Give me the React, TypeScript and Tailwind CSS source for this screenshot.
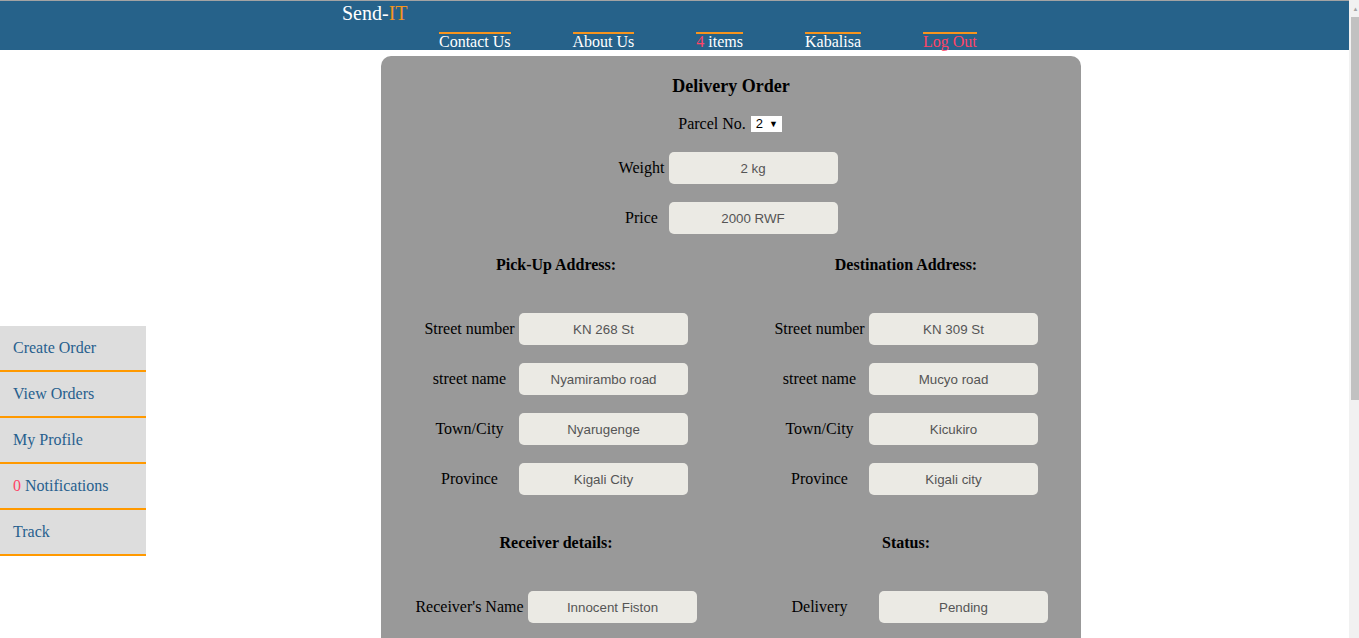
import type { ReactNode } from "react";

const serif = "font-['Liberation_Serif','Times_New_Roman',serif]";

const navLinks = [
  { label: "Contact Us" },
  { label: "About Us" },
  { label: "items", count: "4" },
  { label: "Kabalisa" },
  { label: "Log Out", danger: true },
];

const sideLinks = [
  { label: "Create Order" },
  { label: "View Orders" },
  { label: "My Profile" },
  { label: "Notifications", count: "0" },
  { label: "Track" },
];

function Field({ value }: { value: string }) {
  return (
    <input
      readOnly
      value={value}
      className="h-[32px] w-[169px] rounded-[5px] bg-[#ebeae4] text-center font-['Liberation_Sans',Arial,sans-serif] text-[13.33px] text-[#555] outline-none"
    />
  );
}

function Row({ label, value, labelW }: { label: string; value: string; labelW: string }) {
  return (
    <div className="flex items-center gap-[4px]">
      <span className={`${labelW} whitespace-nowrap text-center text-[16px] leading-[18px] text-black`}>
        {label}
      </span>
      <Field value={value} />
    </div>
  );
}

function Section({ title, children }: { title: string; children: ReactNode }) {
  return (
    <div className="flex flex-col items-center">
      <h3 className="text-[16px] font-bold leading-[18px] text-black">{title}</h3>
      <div className="mt-[39px] flex flex-col items-center gap-[18px]">{children}</div>
    </div>
  );
}

// fake browser scrollbar on the right edge
function Scrollbar() {
  return (
    <div className="flex w-[10px] shrink-0 flex-col bg-[#f1f1f1]">
      <div className="flex h-[17px] items-center justify-center pl-[3px] text-[6px] leading-none text-[#a3a3a3]">
        ▲
      </div>
      <div className="ml-[2px] h-[383px] bg-[#c1c1c1]" />
    </div>
  );
}

export default function App() {
  return (
    <div className={`${serif} flex h-[638px] overflow-hidden bg-white`}>
      <div className="min-w-0 flex-1">
        <header className="h-[50px] border-t border-[#a3a3a3] bg-[#26628a]">
          <div className="pl-[342px] pt-[1px] text-[20px] leading-[23px] text-white">
            Send-<span className="text-[#f7941d]">IT</span>
          </div>
          <nav className="mt-[7px] flex gap-[62px] pl-[439px]">
            {navLinks.map((l) => (
              <a
                key={l.label}
                className={`border-t-2 border-[#f7941d] text-[16px] leading-[16px] ${
                  l.danger ? "text-[#ff4466]" : "text-white"
                }`}
              >
                {l.count && <span className="text-[#ff4466]">{l.count} </span>}
                {l.label}
              </a>
            ))}
          </nav>
        </header>

        <div className="flex items-start">
          <aside className="mt-[276px] w-[146px] shrink-0">
            {sideLinks.map((l) => (
              <a
                key={l.label}
                className="flex h-[46px] items-center border-b-2 border-[#f90] bg-[#dddddd] pl-[13px] text-[16px] text-[#27608e]"
              >
                {l.count && <span className="mr-[4px] text-[#ff4466]">{l.count}</span>}
                {l.label}
              </a>
            ))}
          </aside>

          <main className="ml-[235px] mt-[6px] w-[700px] rounded-[10px] bg-[#999999] pb-[330px] pt-[20px]">
            <h2 className="text-center text-[18px] font-bold leading-[20px] text-black">Delivery Order</h2>

            <div className="mt-[20px] flex items-center justify-center gap-[5px] pr-[2px]">
              <span className="text-[16px] leading-[16px] text-black">Parcel No.</span>
              <div className="flex h-[16px] w-[31px] items-center gap-[6px] bg-white pl-[5px] font-['Liberation_Sans',Arial,sans-serif] text-[13px] leading-[16px] text-black">
                2<span className="text-[9px]">▼</span>
              </div>
            </div>

            <div className="mt-[20px] flex flex-col items-center gap-[18px] pr-[6px]">
              <Row label="Weight" value="2 kg" labelW="w-[46px]" />
              <Row label="Price" value="2000 RWF" labelW="w-[46px]" />
            </div>

            <div className="mt-[22px] grid grid-cols-2">
              <Section title="Pick-Up Address:">
                <Row label="Street number" value="KN 268 St" labelW="w-[91px]" />
                <Row label="street name" value="Nyamirambo road" labelW="w-[91px]" />
                <Row label="Town/City" value="Nyarugenge" labelW="w-[91px]" />
                <Row label="Province" value="Kigali City" labelW="w-[91px]" />
              </Section>
              <Section title="Destination Address:">
                <Row label="Street number" value="KN 309 St" labelW="w-[91px]" />
                <Row label="street name" value="Mucyo road" labelW="w-[91px]" />
                <Row label="Town/City" value="Kicukiro" labelW="w-[91px]" />
                <Row label="Province" value="Kigali city" labelW="w-[91px]" />
              </Section>
            </div>

            <div className="mt-[39px] grid grid-cols-2">
              <Section title="Receiver details:">
                <Row label="Receiver's Name" value="Innocent Fiston" labelW="w-[109px]" />
              </Section>
              <Section title="Status:">
                <Row label="Delivery" value="Pending" labelW="w-[111px]" />
              </Section>
            </div>
          </main>
        </div>
      </div>
      <Scrollbar />
    </div>
  );
}
